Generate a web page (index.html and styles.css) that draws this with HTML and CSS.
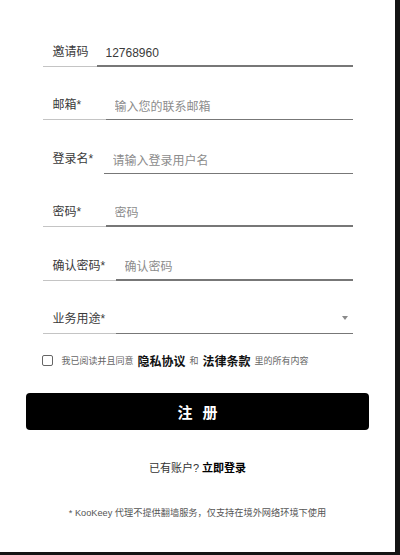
FILE: index.html
```html
<!DOCTYPE html>
<html lang="zh-CN">
<head>
<meta charset="utf-8">
<title>注册</title>
<link rel="stylesheet" href="styles.css">
</head>
<body>
<div class="panel">
  <form class="form">
    <div class="row">
      <label class="label w54">邀请码</label>
      <input class="field thick" type="text" value="12768960">
    </div>
    <div class="row">
      <label class="label w63">邮箱*</label>
      <input class="field" type="text" placeholder="输入您的联系邮箱">
    </div>
    <div class="row">
      <label class="label w61 bare">登录名*</label>
      <input class="field" type="text" placeholder="请输入登录用户名">
    </div>
    <div class="row">
      <label class="label w63">密码*</label>
      <input class="field thick" type="password" placeholder="密码">
    </div>
    <div class="row">
      <label class="label w73">确认密码*</label>
      <input class="field thick" type="password" placeholder="确认密码">
    </div>
    <div class="row">
      <label class="label w73">业务用途*</label>
      <div class="field select">
        <svg class="arrow" width="6" height="4" viewBox="0 0 6 4"><polygon points="0,0 6,0 3,4" fill="#8a8a8a"/></svg>
      </div>
    </div>

    <div class="agree">
      <input class="check" type="checkbox">
      <span class="small">我已阅读并且同意</span>
      <a class="link">隐私协议</a>
      <span class="small">和</span>
      <a class="link">法律条款</a>
      <span class="small">里的所有内容</span>
    </div>

    <button class="submit" type="button">注册</button>
  </form>

  <p class="login">已有账户? <a class="login-link">立即登录</a></p>

  <p class="note">* KooKeey 代理不提供翻墙服务，仅支持在境外网络环境下使用</p>
</div>
</body>
</html>
```
FILE: styles.css
```css
html, body {
  margin: 0;
  padding: 0;
}
body {
  background: #141414;
  font-family: "Liberation Sans", "Noto Sans CJK SC", sans-serif;
  color: #3a3a3a;
  width: 400px;
  height: 555px;
  overflow: hidden;
}
.panel {
  width: 395px;
  height: 552px;
  background: #fff;
  box-sizing: border-box;
  padding-top: 37px;
  display: flex;
  flex-direction: column;
  align-items: center;
}
.form {
  display: flex;
  flex-direction: column;
  align-items: center;
  width: 100%;
}
.row {
  display: flex;
  width: 310px;
  height: 30px;
  margin-bottom: 23.4px;
}
.row:nth-child(6) {
  margin-bottom: 0;
}
.label {
  box-sizing: border-box;
  flex: none;
  height: 30px;
  padding: 5px 0 0 10px;
  font-size: 12px;
  line-height: 20px;
  color: #3a3a3a;
  border-bottom: 1px solid #c4c4c4;
  white-space: nowrap;
}
.label.bare {
  border-bottom-color: transparent;
}
.w54 { width: 54px; }
.w61 { width: 61px; }
.w63 { width: 63px; }
.w73 { width: 73px; }
.field {
  box-sizing: border-box;
  flex: 1;
  min-width: 0;
  height: 30px;
  margin: 0;
  padding: 5px 6px 0 9px;
  border: none;
  border-bottom: 1px solid #777;
  border-radius: 0;
  font-family: inherit;
  font-size: 12px;
  line-height: 20px;
  color: #3a3a3a;
  background: transparent;
  outline: none;
  display: block;
}
.field.thick {
  border-bottom-width: 2px;
  padding-bottom: 1px;
}
.field::placeholder {
  color: #8c8c8c;
}
.select {
  display: flex;
  justify-content: flex-end;
  align-items: center;
  padding: 0 5px 0 0;
}
.arrow {
  display: block;
  margin-top: -1px;
}
.agree {
  width: 312px;
  display: flex;
  align-items: center;
  margin-top: 17px;
  height: 20px;
  white-space: nowrap;
}
.check {
  appearance: none;
  -webkit-appearance: none;
  width: 11px;
  height: 11px;
  margin: 0 9px 0 0;
  border: 1px solid #666;
  border-radius: 2px;
  box-sizing: border-box;
  background: #fff;
  flex: none;
}
.small {
  font-size: 9px;
  color: #666;
}
.link {
  font-size: 12px;
  font-weight: bold;
  color: #111;
  margin: 0 4px;
}
.submit {
  margin-top: 22.5px;
  width: 343px;
  height: 37px;
  border: none;
  border-radius: 4px;
  background: #000;
  color: #fff;
  font-family: inherit;
  font-size: 15px;
  font-weight: bold;
  letter-spacing: 10px;
  text-indent: 10px;
  padding: 0;
  cursor: pointer;
}
.login {
  margin: 30px 0 0;
  font-size: 11px;
  line-height: 16px;
  color: #333;
}
.login-link {
  font-weight: bold;
  color: #000;
}
.note {
  margin: 30px 0 0;
  font-size: 9.2px;
  line-height: 14px;
  color: #555;
}
```
